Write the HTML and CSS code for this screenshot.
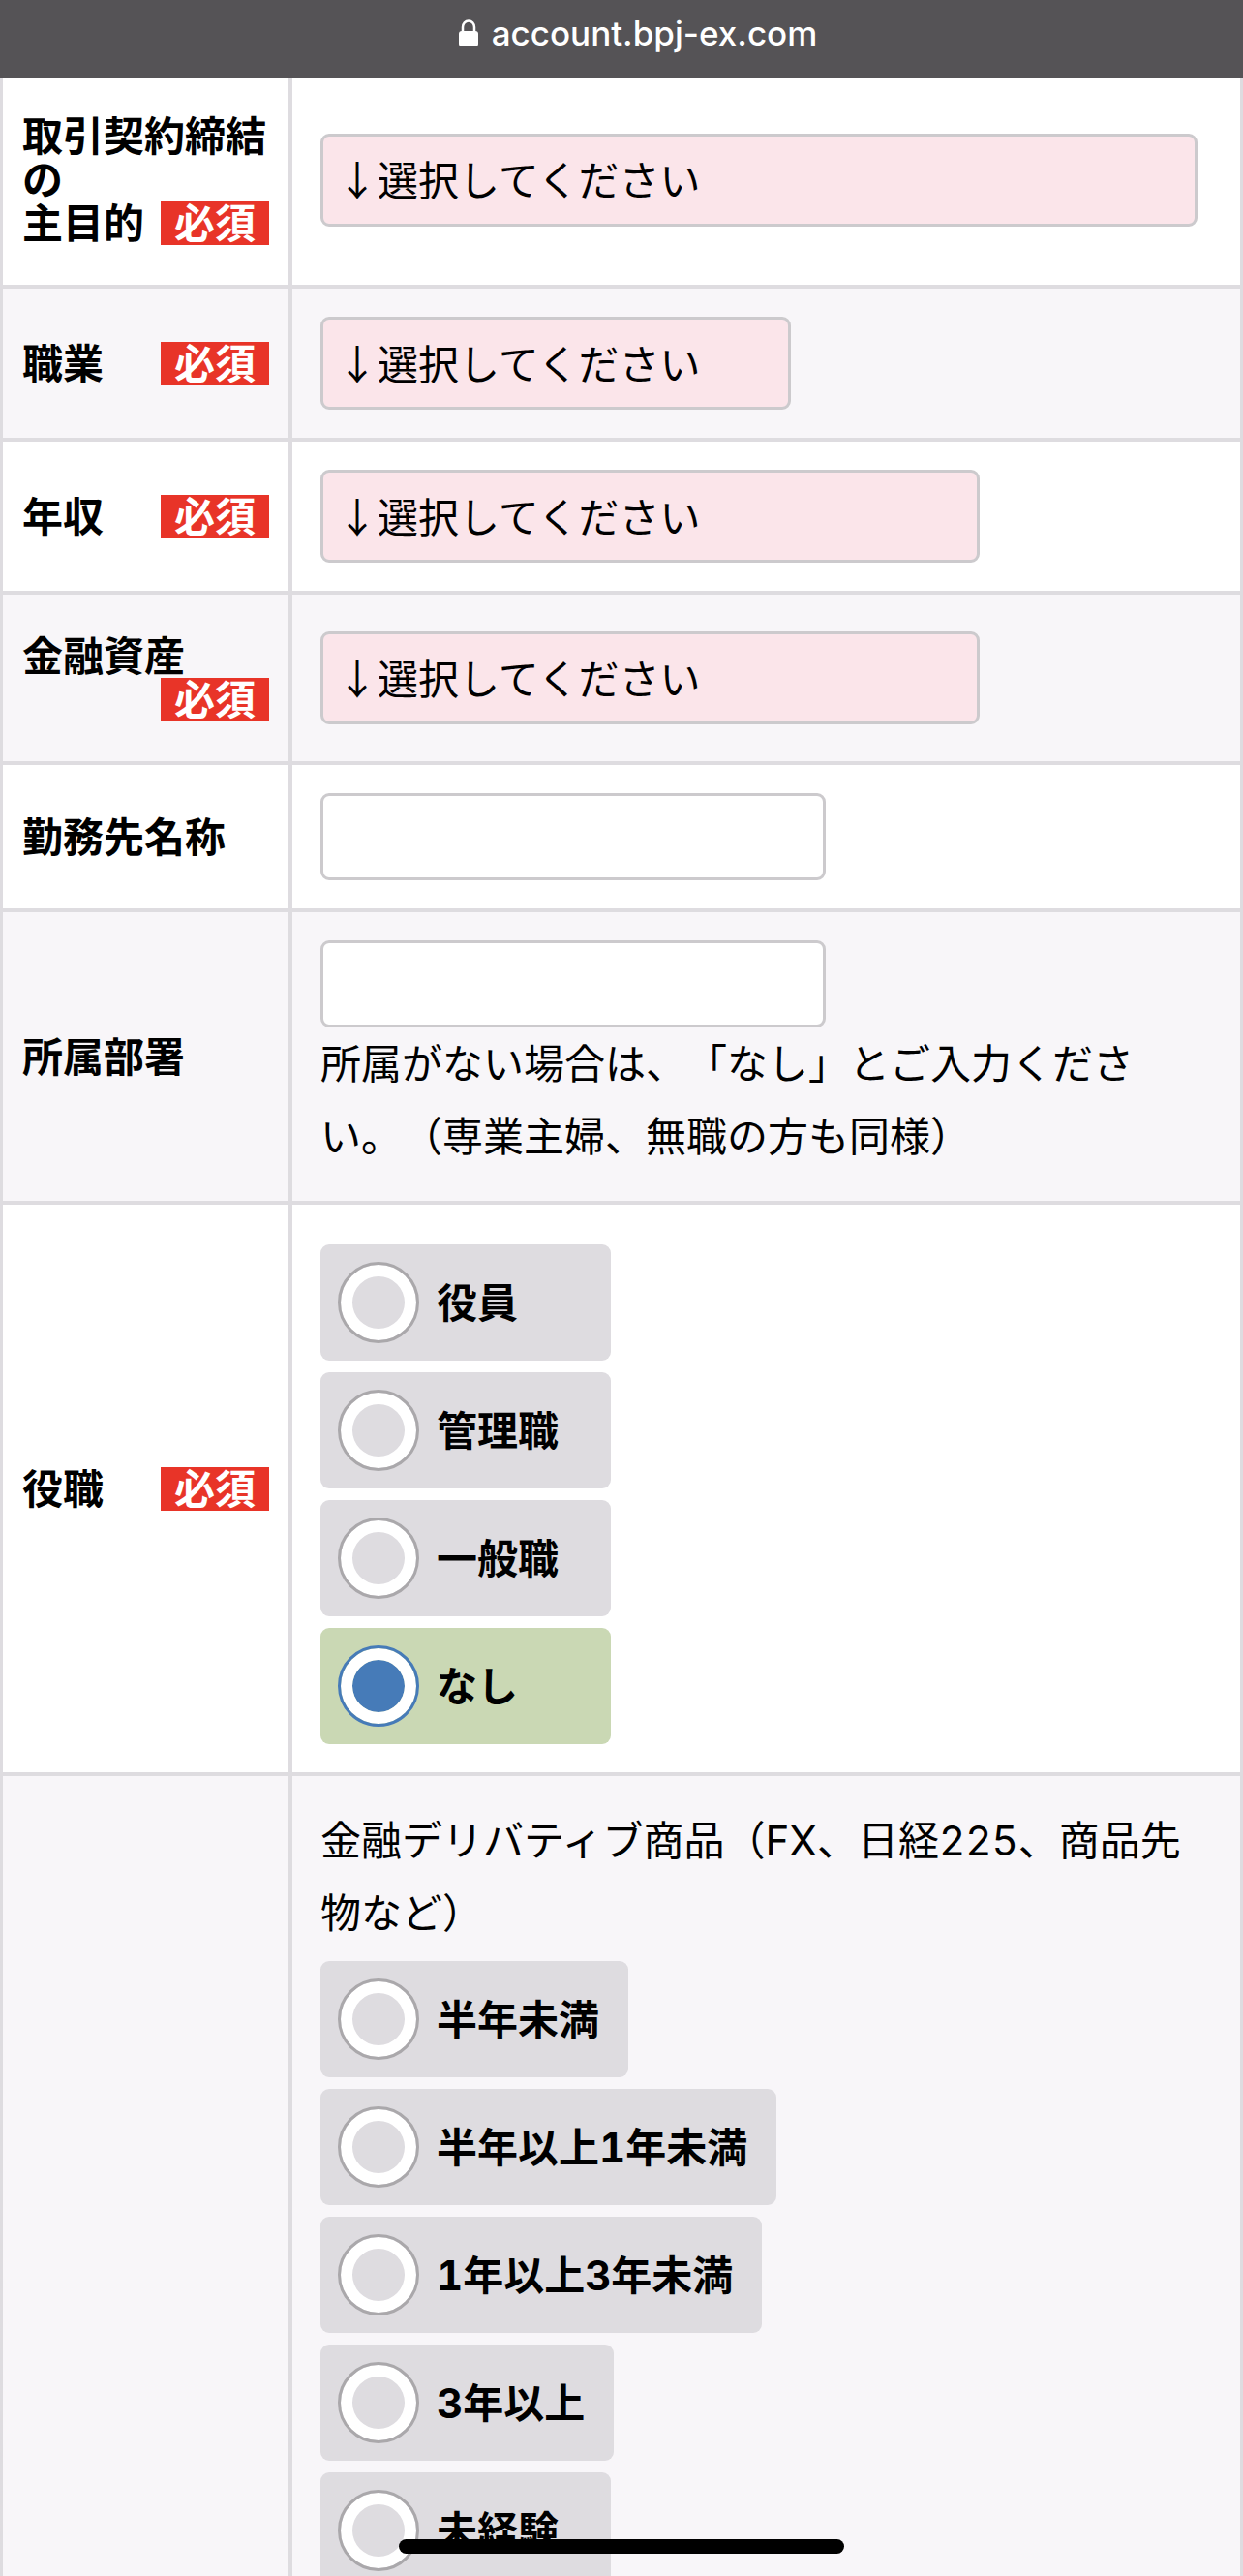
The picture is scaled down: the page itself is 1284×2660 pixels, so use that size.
FILE: index.html
```html
<!DOCTYPE html>
<html lang="ja">
<head>
<meta charset="utf-8">
<meta name="viewport" content="width=device-width, initial-scale=1">
<title>account.bpj-ex.com</title>
<link rel="stylesheet" href="styles.css">
</head>
<body>
<header class="address-bar">
  <svg class="lock" viewBox="0 0 20 28" aria-hidden="true">
    <path d="M4 13V8a6 6.500 0 0 1 12 0v5" fill="none" stroke="currentColor" stroke-width="2.500"/>
    <rect x="0" y="12" width="20" height="16" rx="3" fill="currentColor"/>
  </svg>
  <span>account.bpj-ex.com</span>
</header>
<main class="page">
  <form>
    <table class="form-table">
      <tbody>
        <tr>
          <th scope="row"><label for="purpose">取引契約締結の<br>主目的<span class="required">必須</span></label></th>
          <td><select id="purpose" class="field select wide"><option>↓選択してください</option></select></td>
        </tr>
        <tr>
          <th scope="row"><label for="job">職業<span class="required">必須</span></label></th>
          <td><select id="job" class="field select narrow"><option>↓選択してください</option></select></td>
        </tr>
        <tr>
          <th scope="row"><label for="income">年収<span class="required">必須</span></label></th>
          <td><select id="income" class="field select medium"><option>↓選択してください</option></select></td>
        </tr>
        <tr>
          <th scope="row"><label for="assets">金融資産<span class="required">必須</span></label></th>
          <td><select id="assets" class="field select medium"><option>↓選択してください</option></select></td>
        </tr>
        <tr>
          <th scope="row"><label for="company">勤務先名称</label></th>
          <td><input id="company" class="field text" type="text"></td>
        </tr>
        <tr>
          <th scope="row"><label for="department">所属部署</label></th>
          <td>
            <input id="department" class="field text" type="text" aria-describedby="department-note">
            <p id="department-note" class="note">所属がない場合は、「なし」とご入力ください。（専業主婦、無職の方も同様）</p>
          </td>
        </tr>
        <tr>
          <th scope="row" id="position-label">役職<span class="required">必須</span></th>
          <td>
            <div class="options" role="radiogroup" aria-labelledby="position-label">
              <label class="option"><input type="radio" name="position">役員</label>
              <label class="option"><input type="radio" name="position">管理職</label>
              <label class="option"><input type="radio" name="position">一般職</label>
              <label class="option"><input type="radio" name="position" checked>なし</label>
            </div>
          </td>
        </tr>
        <tr>
          <th scope="row"></th>
          <td>
            <p id="derivatives" class="note">金融デリバティブ商品（FX、日経225、商品先物など）</p>
            <div class="options" role="radiogroup" aria-labelledby="derivatives">
              <label class="option"><input type="radio" name="derivatives">半年未満</label>
              <label class="option"><input type="radio" name="derivatives">半年以上1年未満</label>
              <label class="option"><input type="radio" name="derivatives">1年以上3年未満</label>
              <label class="option"><input type="radio" name="derivatives">3年以上</label>
              <label class="option"><input type="radio" name="derivatives">未経験</label>
            </div>
          </td>
        </tr>
      </tbody>
    </table>
  </form>
</main>
<div class="home-indicator"></div>
</body>
</html>
```
FILE: styles.css
```css
* {
  box-sizing: border-box;
}

body {
  display: flex;
  flex-direction: column;
  height: 100vh;
  margin: 0;
  background: #fff;
  color: #000;
  font-family: Inter, "Noto Sans CJK JP", sans-serif;
  font-size: 42px;
  text-spacing-trim: space-all;
}

.address-bar {
  display: flex;
  flex: none;
  align-items: center;
  justify-content: center;
  gap: 14px;
  height: 81px;
  padding: 0 0 14px 34px;
  background: #555356;
  color: #fff;
  font-size: 35px;
  font-weight: 500;
}

.lock {
  width: 20px;
  height: 28px;
}

.page {
  flex: 1;
  min-height: 0;
  overflow-y: auto;
  scrollbar-width: none;
}

.form-table {
  width: 100%;
  border: solid #dedce0;
  border-width: 0 3px;
  border-spacing: 0;
  table-layout: fixed;
  font-variant-numeric: tabular-nums;
}

.form-table th,
.form-table td {
  border-bottom: 4px solid #dedce0;
  vertical-align: middle;
  text-align: left;
}

.form-table th {
  width: 299px;
  padding: 41px 20px;
  border-right: 4px solid #dedce0;
  font-weight: 700;
  line-height: 45px;
}

.form-table td {
  padding: 29px 44px 29px 29px;
}

.form-table tr:first-child th {
  padding-top: 37px;
}

.form-table tr:first-child td {
  padding-top: 25px;
}

.form-table tr:nth-child(even) {
  background: #f8f6f9;
}

.required {
  float: right;
  padding: 0 14px;
  background: #e83428;
  color: #fff;
}

.field {
  display: block;
  max-width: 100%;
  margin: 0;
  border: 3px solid #cccacd;
  border-radius: 9px;
  background: #fff;
  color: #000;
  font: inherit;
}

.select {
  appearance: none;
  height: 96px;
  padding: 0 14px 4px;
  background: #fbe5ea;
  font-family: "Noto Sans CJK JP", sans-serif;
}

.text {
  width: 522px;
  height: 90px;
  padding: 0 14px;
}

.wide {
  width: 100%;
}

.medium {
  width: 681px;
}

.narrow {
  width: 486px;
}

.note {
  margin: 0;
  line-height: 75px;
}

.options {
  display: flex;
  flex-direction: column;
  align-items: flex-start;
  gap: 12px;
  padding-top: 12px;
}

.option {
  display: flex;
  align-items: center;
  gap: 18px;
  min-width: 300px;
  height: 120px;
  padding: 0 30px 0 18px;
  border-radius: 9px;
  background: #dedce0;
  font-weight: 700;
  line-height: 45px;
}

.option input {
  flex: none;
  appearance: none;
  width: 84px;
  height: 84px;
  margin: 0;
  padding: 12px;
  border: 3px solid #aaa8ab;
  border-radius: 50%;
  background: #dedce0 content-box;
  box-shadow: inset 0 0 0 12px #fff;
}

.option:has(input:checked) {
  background: #cad8b4;
}

.option input:checked {
  border-color: #467bb8;
  background-color: #467bb8;
}

.home-indicator {
  position: fixed;
  bottom: 23px;
  left: 50%;
  width: 460px;
  height: 15px;
  margin-left: -230px;
  border-radius: 8px;
  background: #000;
}
```
